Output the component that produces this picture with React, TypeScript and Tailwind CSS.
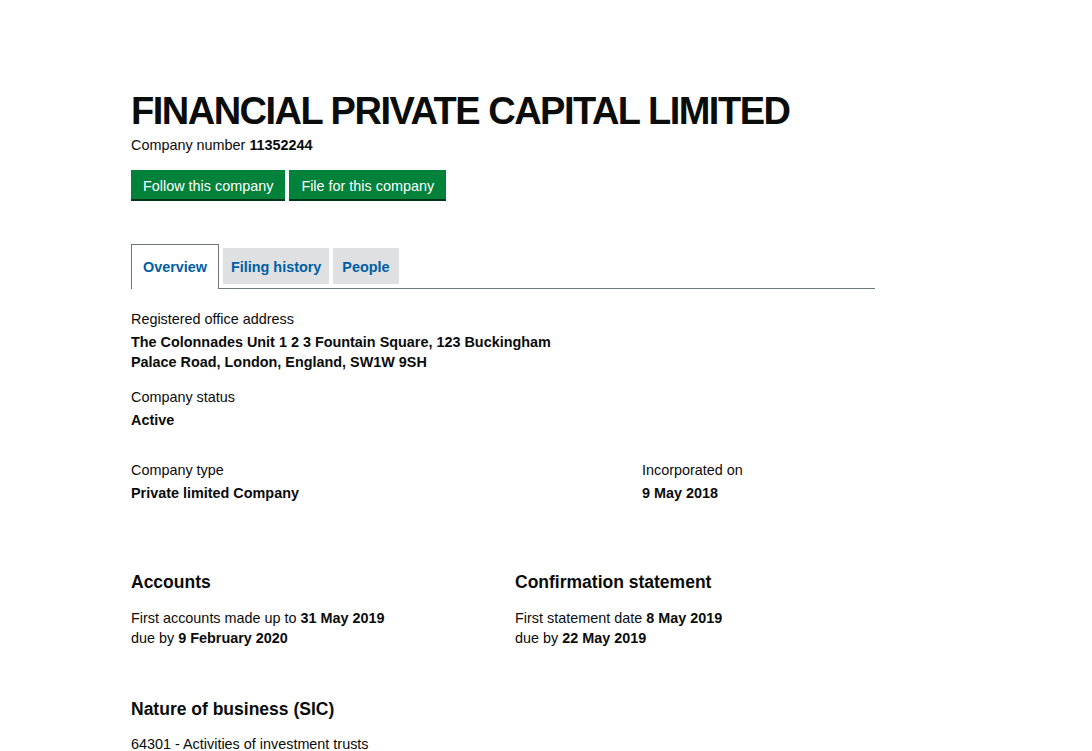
// Company overview page

const font = { fontFamily: '"Liberation Sans", Arial, sans-serif' }

function Field({ label, value }: { label: string; value: React.ReactNode }) {
  return (
    <div>
      <p className="text-[14.4px] leading-[20px] text-[#0b0c0c]">{label}</p>
      <p className="mt-[3px] text-[14.4px] font-bold leading-[20px] text-[#0b0c0c]">{value}</p>
    </div>
  )
}

export default function App() {
  return (
    <div className="min-h-screen bg-white text-[#0b0c0c]" style={font}>
      <div className="ml-[131px] w-[744px] pt-[93px]">
        <h1 className="text-[38px] font-bold leading-[36px] tracking-[-1.5px]">
          FINANCIAL PRIVATE CAPITAL LIMITED
        </h1>
        <p className="mt-[6px] text-[14.4px] leading-[20px]">
          Company number <strong>11352244</strong>
        </p>

        <div className="mt-[15px] flex gap-[4px]">
          <button className="h-[31px] border-b-2 border-[#003618] bg-[#00823b] px-[12px] pt-[4px] text-[14.4px] text-white">
            Follow this company
          </button>
          <button className="h-[31px] border-b-2 border-[#003618] bg-[#00823b] px-[12px] pt-[4px] text-[14.4px] text-white">
            File for this company
          </button>
        </div>

        {/* Tabs */}
        <div className="mt-[43px] flex items-end gap-[4px] border-b border-[#6f777b]">
          <div className="-mb-px flex h-[45px] items-center border border-b-0 border-[#6f777b] bg-white px-[11px] pt-[1px] text-[14.4px] font-bold text-[#005ea5]">
            Overview
          </div>
          <div className="mb-[4px] flex h-[36px] items-center bg-[#dee0e2] px-[8px] pt-[3px] text-[14.4px] font-bold text-[#005ea5]">
            Filing history
          </div>
          <div className="mb-[4px] flex h-[36px] items-center bg-[#dee0e2] px-[9px] pt-[3px] text-[14.4px] font-bold text-[#005ea5]">
            People
          </div>
        </div>

        <div className="mt-[20px]">
          <p className="text-[14.4px] leading-[20px]">Registered office address</p>
          <p className="mt-[3px] w-[420px] text-[14.4px] font-bold leading-[20px]">
            The Colonnades Unit 1 2 3 Fountain Square, 123 Buckingham Palace Road, London, England, SW1W 9SH
          </p>
        </div>

        <div className="mt-[15px]">
          <Field label="Company status" value="Active" />
        </div>

        <div className="mt-[30px] flex">
          <div className="w-[511px]">
            <Field label="Company type" value="Private limited Company" />
          </div>
          <Field label="Incorporated on" value="9 May 2018" />
        </div>

        <div className="mt-[67px] flex">
          <div className="w-[384px]">
            <h2 className="text-[17.5px] font-bold leading-[24px]">Accounts</h2>
            <p className="mt-[14px] text-[14.4px] leading-[20px]">
              First accounts made up to <strong>31 May 2019</strong>
            </p>
            <p className="text-[14.4px] leading-[20px]">
              due by <strong>9 February 2020</strong>
            </p>
          </div>
          <div>
            <h2 className="text-[17.5px] font-bold leading-[24px]">Confirmation statement</h2>
            <p className="mt-[14px] text-[14.4px] leading-[20px]">
              First statement date <strong>8 May 2019</strong>
            </p>
            <p className="text-[14.4px] leading-[20px]">
              due by <strong>22 May 2019</strong>
            </p>
          </div>
        </div>

        <h2 className="mt-[49px] text-[17.5px] font-bold leading-[24px]">Nature of business (SIC)</h2>
        <p className="mt-[13px] text-[14.4px] leading-[20px]">64301 - Activities of investment trusts</p>
      </div>
    </div>
  )
}
